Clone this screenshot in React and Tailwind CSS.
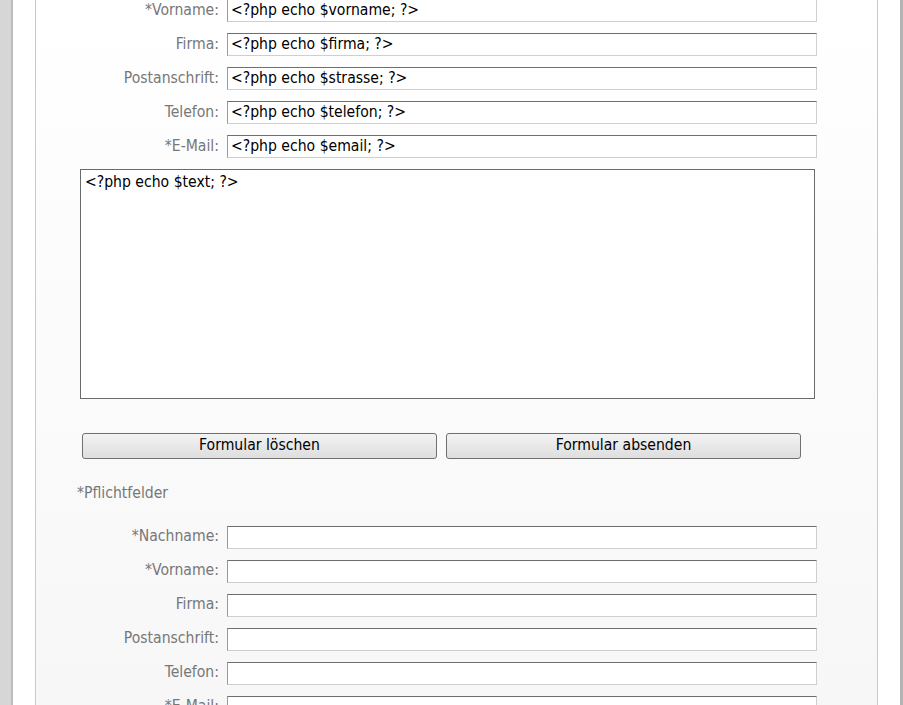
import React from "react";

const font = { fontFamily: "'DejaVu Sans Condensed', 'Noto Sans', sans-serif" };

function Row({ label, value }) {
  return (
    <div className="flex items-center h-[23px]">
      <div className="w-[183px] text-right text-[15.6px] text-[#777777] leading-none">{label}</div>
      <div className="ml-2 w-[590px] h-[23px] bg-white border border-t-[#6e6e6e] border-l-[#9a9a9a] border-r-[#cfcfcf] border-b-[#cfcfcf] flex items-center pl-[3px] text-[15.6px] text-black leading-none whitespace-nowrap overflow-hidden">
        {value}
      </div>
    </div>
  );
}

function Form({ values }) {
  const rows = [
    ["*Nachname:", values ? "<?php echo $nachname; ?>" : ""],
    ["*Vorname:", values ? "<?php echo $vorname; ?>" : ""],
    ["Firma:", values ? "<?php echo $firma; ?>" : ""],
    ["Postanschrift:", values ? "<?php echo $strasse; ?>" : ""],
    ["Telefon:", values ? "<?php echo $telefon; ?>" : ""],
    ["*E-Mail:", values ? "<?php echo $email; ?>" : ""],
  ];
  return (
    <div className="flex flex-col">
      <div className="flex flex-col gap-[11px]">
        {rows.map(([l, v]) => (
          <Row key={l} label={l} value={v} />
        ))}
      </div>
      <div className="mt-[11px] ml-[44px] w-[735px] h-[230px] bg-white border border-[#6a6a6a] px-[4px] pt-[3px] text-[15.6px] text-black leading-[18px]">
        {values ? "<?php echo $text; ?>" : ""}
      </div>
      <div className="mt-[34px] ml-[46px] flex gap-[9px]">
        <div className="w-[355px] h-[26px] rounded-[3px] border border-[#707070] bg-gradient-to-b from-[#f3f3f3] to-[#dedede] flex items-center justify-center text-[15.6px] text-black leading-none">
          Formular löschen
        </div>
        <div className="w-[355px] h-[26px] rounded-[3px] border border-[#707070] bg-gradient-to-b from-[#f3f3f3] to-[#dedede] flex items-center justify-center text-[15.6px] text-black leading-none">
          Formular absenden
        </div>
      </div>
      <div className="mt-[27px] ml-[41px] text-[15.6px] text-[#777777] leading-none">*Pflichtfelder</div>
    </div>
  );
}

export default function App() {
  return (
    <div className="w-[903px] h-[705px] overflow-hidden flex bg-white" style={font}>
      <div className="w-[11px] h-full bg-[#d6d6d6]" />
      <div className="w-[2px] h-full bg-[#bdbdbd]" />
      <div className="w-[22px] h-full bg-white" />
      <div className="w-px h-full bg-[#c9c9c9]" />
      <div className="w-[841px] h-full bg-gradient-to-b from-white to-[#f7f7f7] overflow-hidden">
        <div className="mt-[-35px] flex flex-col">
          <Form values />
          <div className="mt-[24px] flex flex-col gap-[11px]">
            {["*Nachname:", "*Vorname:", "Firma:", "Postanschrift:", "Telefon:", "*E-Mail:"].map((l) => (
              <Row key={l} label={l} value="" />
            ))}
          </div>
        </div>
      </div>
      <div className="w-px h-full bg-[#c9c9c9]" />
      <div className="w-[22px] h-full bg-white" />
      <div className="w-[3px] h-full bg-[#b4b4b4]" />
    </div>
  );
}
